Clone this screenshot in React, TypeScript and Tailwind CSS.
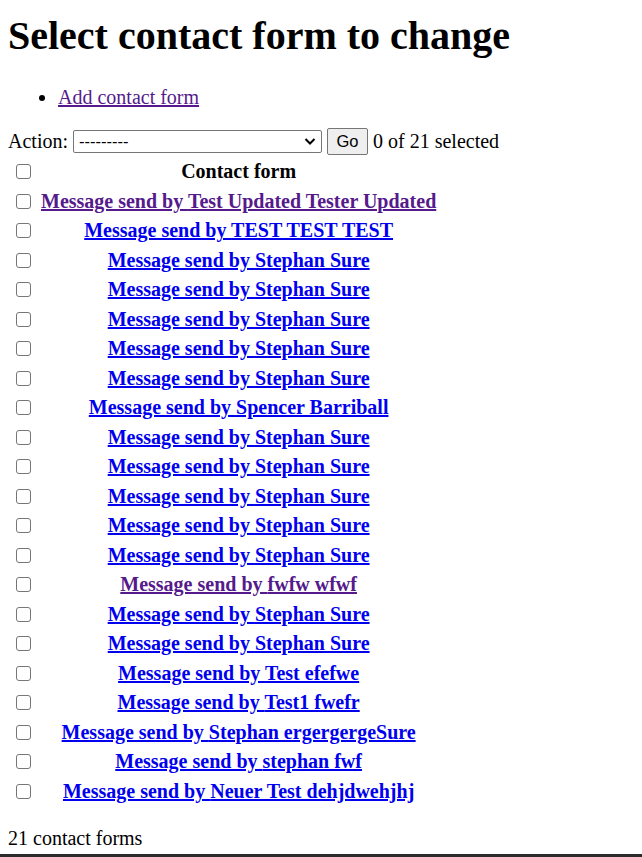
import React from "react";

type Row = { id: number; name: string; visited?: boolean };

const rows: Row[] = [
  { id: 21, name: "Test Updated Tester Updated", visited: true },
  { id: 20, name: "TEST TEST TEST" },
  { id: 19, name: "Stephan Sure" },
  { id: 18, name: "Stephan Sure" },
  { id: 17, name: "Stephan Sure" },
  { id: 16, name: "Stephan Sure" },
  { id: 15, name: "Stephan Sure" },
  { id: 14, name: "Spencer Barriball" },
  { id: 13, name: "Stephan Sure" },
  { id: 12, name: "Stephan Sure" },
  { id: 11, name: "Stephan Sure" },
  { id: 10, name: "Stephan Sure" },
  { id: 9, name: "Stephan Sure" },
  { id: 8, name: "fwfw wfwf", visited: true },
  { id: 7, name: "Stephan Sure" },
  { id: 6, name: "Stephan Sure" },
  { id: 5, name: "Test efefwe" },
  { id: 4, name: "Test1 fwefr" },
  { id: 3, name: "Stephan ergergergeSure" },
  { id: 2, name: "stephan fwf" },
  { id: 1, name: "Neuer Test dehjdwehjhj" },
];

function Check() {
  return (
    <input
      type="checkbox"
      className="ml-[6px] block h-[15px] w-[15px] appearance-none rounded-[3px] border border-[#767676] bg-white"
    />
  );
}

export default function App() {
  return (
    <div className="min-h-screen bg-white px-[8px] text-[20px] leading-[23px] text-black [font-family:'Liberation_Serif','Times_New_Roman',serif]">
      <h1 className="pt-[13px] text-[40px] font-bold leading-[46px]">Select contact form to change</h1>

      <ul className="mt-[27px] list-disc pl-[50px]">
        <li>
          <a href="#" className="text-[#551A8B] underline">
            Add contact form
          </a>
        </li>
      </ul>

      <form className="mt-[19.5px]">
        <div className="flex h-[26px] items-center gap-[5px]">
          <label className="flex items-center gap-[5px]">
            Action:
            <span className="relative block">
              <select className="block h-[23px] w-[249px] appearance-none rounded-[2px] border border-[#767676] bg-white pl-[5px] text-[16.5px] leading-[21px] [font-family:'Liberation_Sans',Arial,sans-serif]">
                <option>---------</option>
              </select>
              <svg
                className="pointer-events-none absolute right-[6px] top-[7px]"
                width="12"
                height="9"
                viewBox="0 0 12 9"
                fill="none"
              >
                <path d="M1.5 2l4.5 4.5L10.5 2" stroke="#000" strokeWidth="2" />
              </svg>
            </span>
          </label>
          <button
            type="button"
            className="h-[27px] w-[41px] rounded-[2px] border border-[#767676] bg-[#efefef] text-[16.5px] leading-[25px] [font-family:'Liberation_Sans',Arial,sans-serif]"
          >
            Go
          </button>
          <span>0 of 21 selected</span>
        </div>

        <table className="mt-[1.5px] border-separate border-spacing-[2px]">
          <thead>
            <tr className="h-[27.5px]">
              <th className="w-[28px] p-0 align-middle">
                <Check />
              </th>
              <th className="px-[1px] py-0 text-center align-middle font-bold">Contact form</th>
            </tr>
          </thead>
          <tbody>
            {rows.map((r, i) => (
              <tr key={i} className="h-[27.5px]">
                <td className="w-[28px] p-0 align-middle">
                  <Check />
                </td>
                <th className="px-[1px] py-0 text-center align-middle font-bold">
                  <a
                    href="#"
                    className={r.visited ? "text-[#551A8B] underline" : "text-[#0000EE] underline"}
                  >
                    Message send by {r.name}
                  </a>
                </th>
              </tr>
            ))}
          </tbody>
        </table>

        <p className="mt-[20px]">21 contact forms</p>
      </form>

      <div className="fixed bottom-0 left-0 right-0 h-[3px] bg-[#2b2b2b]" />
    </div>
  );
}
